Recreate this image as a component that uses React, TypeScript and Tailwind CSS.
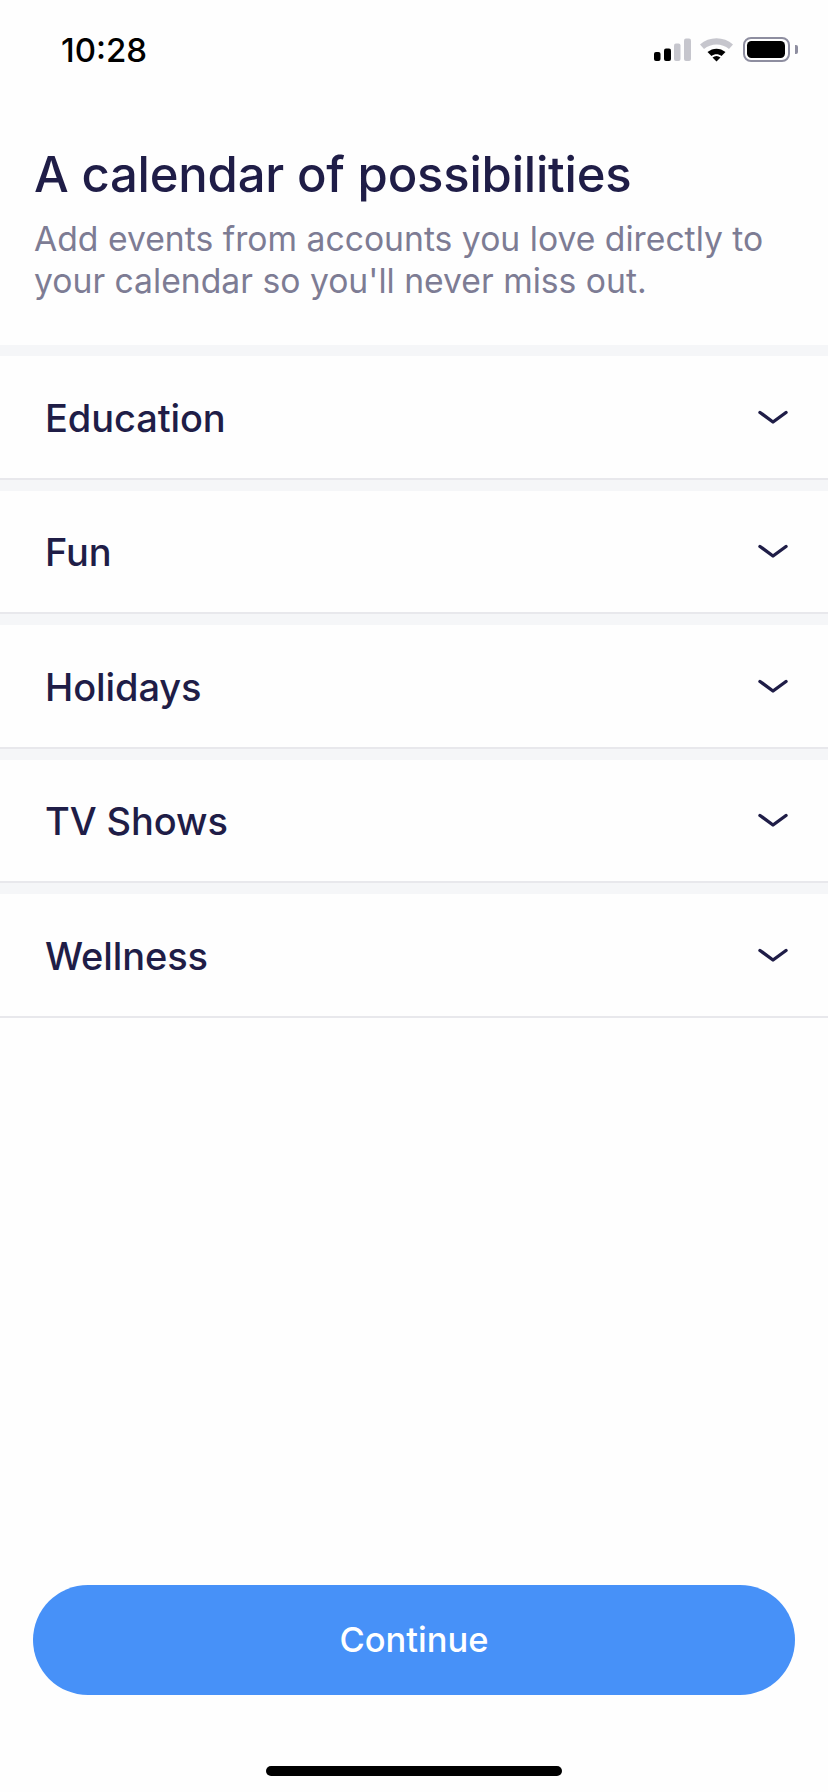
const rows = ["Education", "Fun", "Holidays", "TV Shows", "Wellness"];

function Chevron() {
  return (
    <svg width="36" height="20" viewBox="0 0 36 20" fill="none" className="block">
      <path d="M5 5.500 L18 15 L31 5.500" stroke="#1f1d47" strokeWidth="3.4" strokeLinecap="round" strokeLinejoin="round" />
    </svg>
  );
}

function StatusIcons() {
  return (
    <svg width="140" height="30" viewBox="0 0 140 30" className="block">
      <rect x="2" y="17" width="6.500" height="9" rx="2" fill="#000" />
      <rect x="12" y="13.500" width="7" height="12.500" rx="2" fill="#000" />
      <rect x="22" y="8.500" width="6.500" height="17.500" rx="2" fill="#c6c6cd" />
      <rect x="32" y="3.500" width="7" height="22.500" rx="2" fill="#c6c6cd" />
      <path d="M48 9.500 C57 1 72 1 81 9.500 L77 14 C70 8 59 8 52 14 Z" fill="#c6c6cd" />
      <path d="M55.500 17 C61 12.500 68 12.500 73.500 17 L69.500 21 C66.500 18.500 62.500 18.500 59.500 21 Z" fill="#000" />
      <path d="M60.500 22.500 C63 20.500 66 20.500 68.500 22.500 L64.500 26.500 Z" fill="#000" />
      <rect x="92" y="3" width="45" height="23" rx="7" fill="none" stroke="#8e8ea0" strokeWidth="2" />
      <rect x="95" y="6" width="38" height="17" rx="4.500" fill="#000" />
    </svg>
  );
}

export default function App() {
  return (
    <div className="flex h-[1792px] w-[828px] flex-col overflow-hidden bg-[#fefefe] font-['Inter',sans-serif]">
      <div className="flex h-[68px] items-end justify-between pl-[61px] pr-[36px]">
        <span className="text-[33px] leading-[36px] font-medium text-black">10:28</span>
        <div className="relative top-[-3px]">
          <StatusIcons />
          <span className="absolute right-[-6px] top-[10px] h-[9px] w-[3px] rounded-r-[2px] bg-[#8e8ea0]" />
        </div>
      </div>
      <div className="px-[34px] pt-[79px]">
        <h1 className="text-[49px] leading-[56px] font-medium tracking-[-0.2px] text-[#1f1d47]">A calendar of possibilities</h1>
        <p className="mt-[15px] text-[33.700px] leading-[42px] text-[#7d7c94]">
          Add events from accounts you love directly to
          <br />
          your calendar so you'll never miss out.
        </p>
      </div>
      <div className="mt-[43px] flex flex-col">
        {rows.map((r) => (
          <div key={r} className="flex flex-col">
            <div className="h-[11px] bg-[#f5f6f8]" />
            <div className="flex h-[123.500px] items-center justify-between border-b-2 border-[#e8e8ec] bg-[#fefefe] pl-[45px] pr-[37px]">
              <span className="relative top-[1px] text-[38px] leading-[44px] font-medium tracking-[-0.1px] text-[#1f1d47]">{r}</span>
              <Chevron />
            </div>
          </div>
        ))}
      </div>
      <div className="flex-1" />
      <div className="px-[33px]">
        <button className="flex h-[110px] w-full items-center justify-center rounded-[55px] bg-[#4791f8] text-[34.500px] font-medium text-white">
          Continue
        </button>
      </div>
      <div className="flex justify-center pt-[71px] pb-[16px]">
        <div className="h-[10px] w-[296px] rounded-full bg-black" />
      </div>
    </div>
  );
}
